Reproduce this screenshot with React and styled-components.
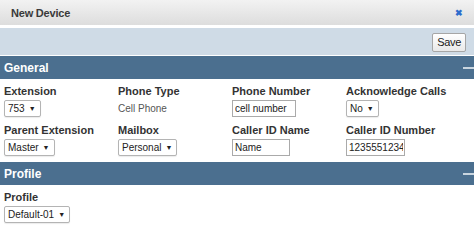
import React from "react";
import styled, { createGlobalStyle } from "styled-components";

const GlobalStyle = createGlobalStyle`
  body {
    margin: 0;
    background: #fff;
    font-family: "Liberation Sans", Arial, sans-serif;
  }
`;

const general = [
  { label: "Extension", kind: "select", value: "753" },
  { label: "Phone Type", kind: "text", value: "Cell Phone" },
  { label: "Phone Number", kind: "input", value: "cell number", width: 64 },
  { label: "Acknowledge Calls", kind: "select", value: "No" },
  { label: "Parent Extension", kind: "select", value: "Master" },
  { label: "Mailbox", kind: "select", value: "Personal" },
  { label: "Caller ID Name", kind: "input", value: "Name", width: 58 },
  { label: "Caller ID Number", kind: "input", value: "1235551234", width: 59 },
];

const Control = ({ kind, value, width }) => {
  if (kind === "select")
    return (
      <SelectBox>
        {value}
        <Arrow>▼</Arrow>
      </SelectBox>
    );
  if (kind === "input") return <TextInput $w={width} defaultValue={value} />;
  return <Plain>{value}</Plain>;
};

const App = () => {
  return (
    <>
      <GlobalStyle />
      <Dialog>
        <TitleBar>
          <Title>New Device</Title>
          <Close>✖</Close>
        </TitleBar>
        <Toolbar>
          <SaveButton>Save</SaveButton>
        </Toolbar>
        <SectionHeader>
          General
          <Collapse />
        </SectionHeader>
        <FieldGrid>
          {general.map((f) => (
            <Field key={f.label}>
              <Label>{f.label}</Label>
              <Control {...f} />
            </Field>
          ))}
        </FieldGrid>
        <SectionHeader>
          Profile
          <Collapse />
        </SectionHeader>
        <FieldGrid>
          <Field>
            <Label>Profile</Label>
            <Control kind="select" value="Default-01" />
          </Field>
        </FieldGrid>
      </Dialog>
    </>
  );
};

export default App;

const Dialog = styled.div`
  width: 474px;
  overflow: hidden;
`;

const TitleBar = styled.div`
  height: 25px;
  background: linear-gradient(#f2f2f2, #dddddd);
  display: flex;
  align-items: center;
  justify-content: space-between;
  padding: 0 11px 0 11px;
  margin-bottom: 3px;
`;

const Title = styled.div`
  font-size: 11px;
  font-weight: bold;
  color: #3a3a3a;
  letter-spacing: -0.2px;
`;

const Close = styled.span`
  color: #2c6ccc;
  font-size: 9px;
  font-weight: bold;
  margin-top: 1px;
`;

const Toolbar = styled.div`
  height: 27px;
  background: #cfdbe6;
  display: flex;
  align-items: center;
  justify-content: flex-end;
  padding-right: 8px;
  margin-bottom: 1px;
`;

const SaveButton = styled.button`
  height: 19px;
  padding: 0 4px;
  font-family: "Liberation Sans", Arial, sans-serif;
  font-size: 11px;
  letter-spacing: -0.3px;
  color: #222;
  background: linear-gradient(#ffffff, #e9e9e9);
  border: 1px solid #a6a6a6;
  border-radius: 2px;
  margin-top: 1px;
`;

const SectionHeader = styled.div`
  height: 23px;
  background: #4b6f8f;
  color: #fff;
  font-size: 12px;
  font-weight: bold;
  display: flex;
  align-items: center;
  justify-content: space-between;
  padding-left: 4px;
`;

const Collapse = styled.span`
  width: 12px;
  height: 2px;
  background: #c9d5df;
  margin-right: -1px;
`;

const FieldGrid = styled.div`
  display: grid;
  grid-template-columns: repeat(4, 114px);
  row-gap: 7px;
  padding: 6px 4px 6px;
`;

const Field = styled.div`
  display: flex;
  flex-direction: column;
  align-items: flex-start;
`;

const Label = styled.div`
  font-size: 11px;
  font-weight: bold;
  color: #333;
  line-height: 13px;
  margin-bottom: 2px;
  white-space: nowrap;
`;

const boxBase = `
  height: 17px;
  box-sizing: border-box;
  border: 1px solid #b4b4b4;
  background: #fff;
  font-family: "Liberation Sans", Arial, sans-serif;
  font-size: 10px;
  color: #222;
`;

const SelectBox = styled.div`
  ${boxBase}
  display: flex;
  align-items: center;
  padding: 0 4px 0 3px;
  border-radius: 2px;
  box-shadow: 0 1px 1px rgba(0, 0, 0, 0.08);
`;

const Arrow = styled.span`
  font-size: 7px;
  margin-left: 4px;
`;

const TextInput = styled.input`
  ${boxBase}
  width: ${(p) => p.$w}px;
  padding: 0 1px 0 2px;
  margin: 0;
  border-color: #aaa;
  outline: none;
`;

const Plain = styled.div`
  font-size: 10px;
  color: #555;
  line-height: 17px;
`;
